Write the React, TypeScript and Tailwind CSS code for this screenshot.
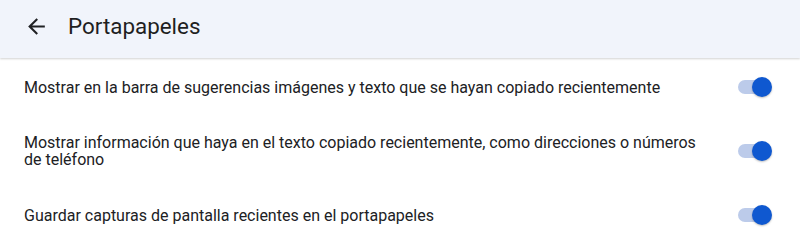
const rows = [
  "Mostrar en la barra de sugerencias imágenes y texto que se hayan copiado recientemente",
  "Mostrar información que haya en el texto copiado recientemente, como direcciones o números de teléfono",
  "Guardar capturas de pantalla recientes en el portapapeles",
];

function Toggle() {
  return (
    <div className="relative h-[22px] w-[38px] shrink-0">
      <div className="absolute left-[2px] top-[4px] h-[14px] w-[32px] rounded-full bg-[#bccbea]" />
      <div className="absolute right-[2px] top-[1px] h-[20px] w-[20px] rounded-full bg-[#0f58d0] shadow-[0_1px_2px_rgba(0,0,0,0.25)]" />
    </div>
  );
}

export default function App() {
  return (
    <div
      className="h-[247px] w-[800px] overflow-hidden bg-white text-[#202124]"
      style={{ fontFamily: "Roboto, 'Liberation Sans', sans-serif" }}
    >
      <header className="flex h-[58px] items-start bg-[#f1f4fb] pl-6 pt-[14px] shadow-[0_1px_2px_rgba(0,0,0,0.18)]">
        <svg viewBox="0 0 24 24" className="h-[25px] w-[25px] fill-[#202124]">
          <path d="M20 11H7.83l5.59-5.59L12 4l-8 8 8 8 1.41-1.41L7.83 13H20v-2z" />
        </svg>
        <h1 className="ml-[19px] text-[22.4px] leading-[25px] text-[#1f1f1f]">Portapapeles</h1>
      </header>
      <ul>
        {rows.map((text) => (
          <li key={text} className="flex min-h-[56px] items-center py-[18px] pl-6 pr-[26px]">
            <p className="w-[690px] text-[16px] leading-[17px]">{text}</p>
            <div className="ml-auto">
              <Toggle />
            </div>
          </li>
        ))}
      </ul>
    </div>
  );
}
